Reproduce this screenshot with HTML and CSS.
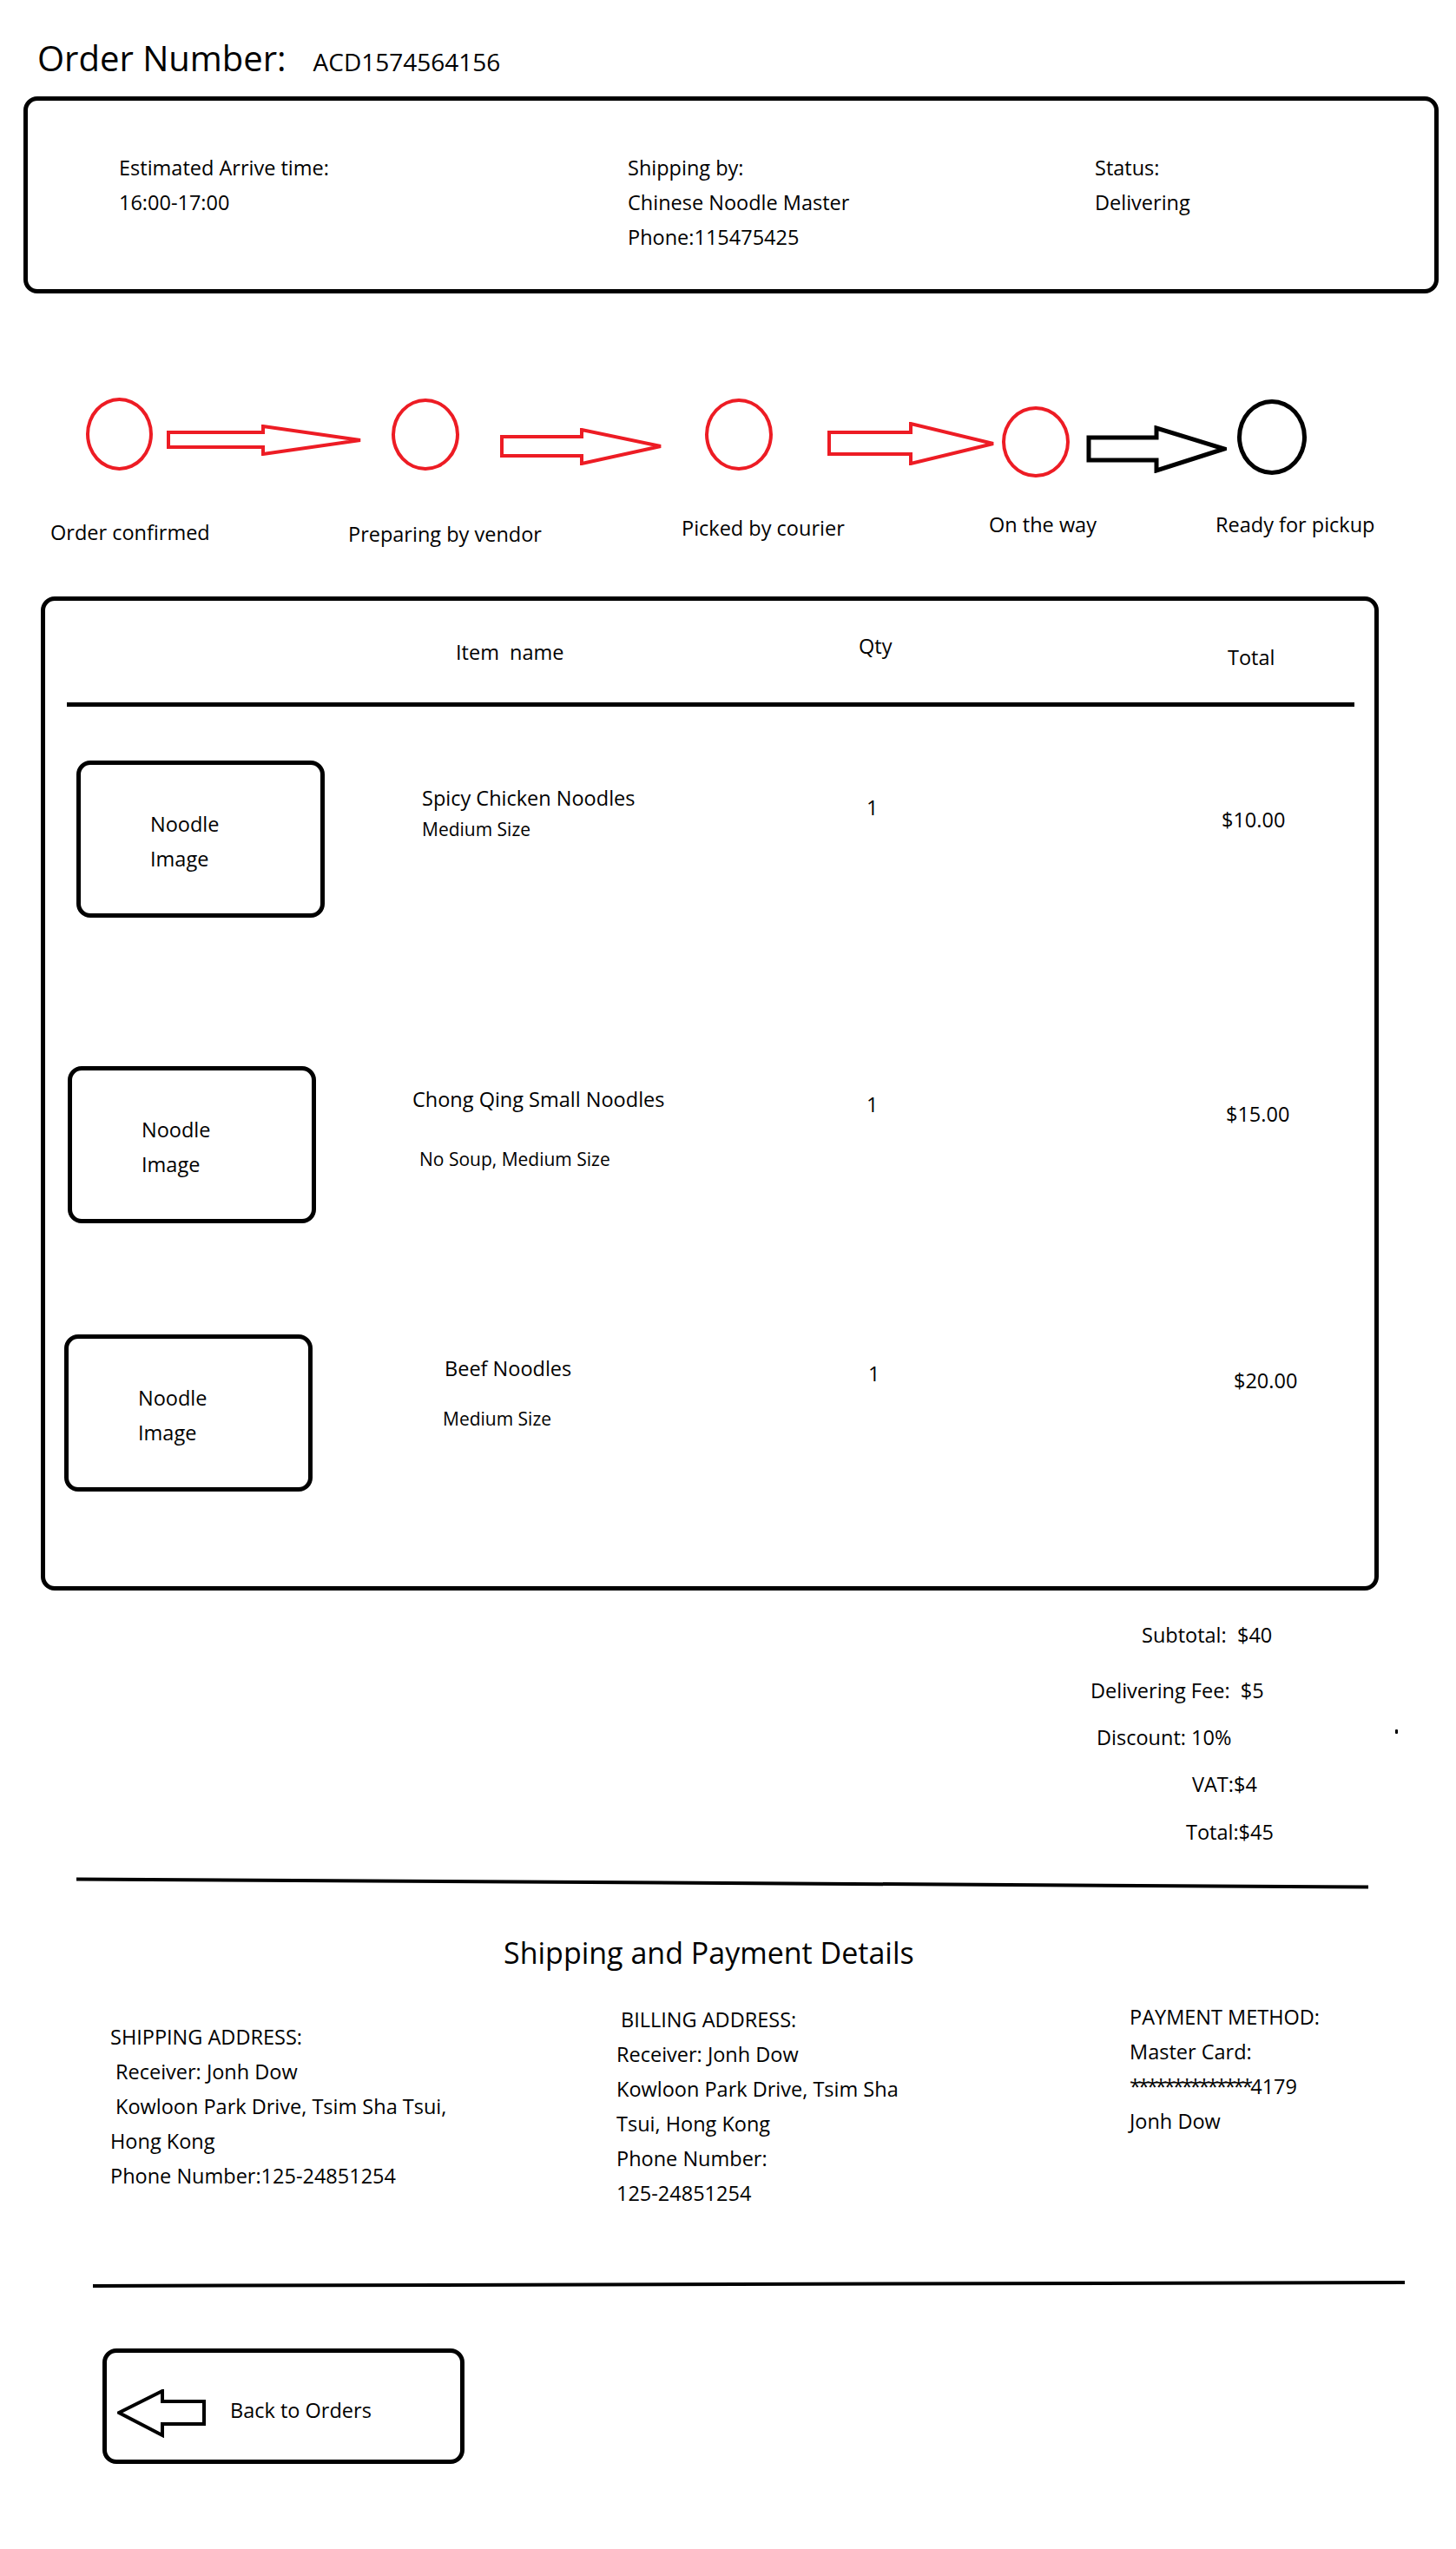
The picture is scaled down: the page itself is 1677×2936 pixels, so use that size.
FILE: index.html
```html
<!DOCTYPE html>
<html lang="en">
<head>
    <meta charset="UTF-8">
    <meta name="viewport" content="width=device-width, initial-scale=1.0">
    <title>Order Details</title>
    <link rel="stylesheet" href="styles.css">
</head>
<body>
    <div class="order-header">
        <h1>Order Number:</h1>
        <span class="order-id">ACD1574564156</span>
    </div>

    <div class="info-box">
        <div class="info-col">
            <div>Estimated Arrive time:</div>
            <div>16:00-17:00</div>
        </div>
        <div class="info-col">
            <div>Shipping by:</div>
            <div>Chinese Noodle Master</div>
            <div>Phone:115475425</div>
        </div>
        <div class="info-col">
            <div>Status:</div>
            <div>Delivering</div>
        </div>
    </div>

    <!-- progress: red = done, black = not yet -->
    <div class="steps">
        <div class="step-circle c1"></div>
        <svg class="arrow a1" width="226" height="36" viewBox="0 0 226 36">
            <polygon points="3,9 112,9 112,2 224,18 112,34 112,26 3,26" />
        </svg>
        <div class="step-circle c2"></div>
        <svg class="arrow a2" width="187" height="43" viewBox="0 0 187 43">
            <polygon points="2,10 94,10 94,2 185,21 94,41 94,32 2,32" />
        </svg>
        <div class="step-circle c3"></div>
        <svg class="arrow a3" width="195" height="50" viewBox="0 0 195 50">
            <polygon points="2,12 96,12 96,2 191,25 96,48 96,37 2,37" />
        </svg>
        <div class="step-circle c4"></div>
        <svg class="arrow a4 pending" width="162" height="55" viewBox="0 0 162 55">
            <polygon points="3,14 81,14 81,3 159,27 81,52 81,40 3,40" />
        </svg>
        <div class="step-circle c5 pending"></div>
    </div>
    <div class="step-labels">
        <div class="label-1">Order confirmed</div>
        <div class="label-2">Preparing by vendor</div>
        <div class="label-3">Picked by courier</div>
        <div class="label-4">On the way</div>
        <div class="label-5">Ready for pickup</div>
    </div>

    <div class="items-box">
        <div class="item-grid items-head">
            <span></span>
            <span class="head-name">Item  name</span>
            <span class="head-qty">Qty</span>
            <span class="head-total">Total</span>
        </div>
        <div class="head-rule"></div>

        <div class="item-grid item-row row-1">
            <div class="noodle-img"><div>Noodle</div><div>Image</div></div>
            <div>
                <div class="item-name">Spicy Chicken Noodles</div>
                <div class="item-desc">Medium Size</div>
            </div>
            <div class="item-qty">1</div>
            <div class="item-total">$10.00</div>
        </div>

        <div class="item-grid item-row row-2">
            <div class="noodle-img"><div>Noodle</div><div>Image</div></div>
            <div>
                <div class="item-name">Chong Qing Small Noodles</div>
                <div class="item-desc">No Soup, Medium Size</div>
            </div>
            <div class="item-qty">1</div>
            <div class="item-total">$15.00</div>
        </div>

        <div class="item-grid item-row row-3">
            <div class="noodle-img"><div>Noodle</div><div>Image</div></div>
            <div>
                <div class="item-name">Beef Noodles</div>
                <div class="item-desc">Medium Size</div>
            </div>
            <div class="item-qty">1</div>
            <div class="item-total">$20.00</div>
        </div>
    </div>

    <div class="summary">
        <div class="sum-line sum-subtotal">Subtotal:  $40</div>
        <div class="sum-line sum-fee">Delivering Fee:  $5</div>
        <div class="sum-line sum-discount">Discount: 10%<span class="stray-dot"></span></div>
        <div class="sum-line sum-vat">VAT:$4</div>
        <div class="sum-line sum-total">Total:$45</div>
    </div>
    <div class="rule rule-sum"></div>

    <h2 class="ship-title">Shipping and Payment Details</h2>
    <div class="ship-grid">
        <div class="ship-col col-shipping">
            <div>SHIPPING ADDRESS:</div>
            <div class="indent">Receiver: Jonh Dow</div>
            <div class="indent">Kowloon Park Drive, Tsim Sha Tsui,</div>
            <div>Hong Kong</div>
            <div>Phone Number:125-24851254</div>
        </div>
        <div class="ship-col col-billing">
            <div class="indent-sm">BILLING ADDRESS:</div>
            <div>Receiver: Jonh Dow</div>
            <div>Kowloon Park Drive, Tsim Sha</div>
            <div>Tsui, Hong Kong</div>
            <div>Phone Number:</div>
            <div>125-24851254</div>
        </div>
        <div class="ship-col col-payment">
            <div>PAYMENT METHOD:</div>
            <div>Master Card:</div>
            <div><span class="card-mask">**************</span>4179</div>
            <div>Jonh Dow</div>
        </div>
    </div>
    <div class="rule rule-bottom"></div>

    <a href="#" class="back-btn">
        <svg class="back-arrow" width="104" height="56" viewBox="0 0 104 56">
            <polygon points="2,27 52,2 52,14 100,14 100,40 52,40 52,53" />
        </svg>
        <span class="back-text">Back to Orders</span>
    </a>
</body>
</html>
```

FILE: styles.css
```css
body {
    margin: 0;
    font-family: "Open Sans", "Noto Sans", sans-serif;
    font-size: 23.5px;
    line-height: 40px;
    color: #000;
    background: #fff;
}

/* header */
.order-header {
    display: flex;
    align-items: baseline;
    height: 54px;
    line-height: 54px;
    padding: 40px 0 0 43px;
}
.order-header h1 {
    margin: 0;
    font-size: 40px;
    font-weight: 400;
}
.order-id {
    margin-left: 31px;
    font-size: 28px;
}

.info-box {
    box-sizing: border-box;
    display: grid;
    grid-template-columns: 586px 538px 1fr;
    width: 1630px;
    height: 227px;
    margin: 17px 0 0 27px;
    padding: 57px 0 0 105px;
    border: 5px solid #000;
    border-radius: 16px;
}

/* progress steps */
.steps {
    display: flex;
    align-items: flex-start;
    margin-top: 120px;
    padding-left: 99px;
}
.step-circle {
    flex-shrink: 0;
    box-sizing: border-box;
    width: 77px;
    height: 84px;
    border: 4px solid #ed1c24;
    border-radius: 50%;
}
.step-circle.pending {
    border: 5px solid #000;
}
.c2 { width: 78px; height: 83px; margin: 1px 0 0 34px; }
.c3 { width: 78px; height: 83px; margin: 1px 0 0 49px; }
.c4 { width: 78px; height: 82px; margin: 10px 0 0 6px; }
.c5 { width: 80px; height: 87px; margin: 2px 0 0 12px; }

.arrow {
    flex-shrink: 0;
}
.arrow polygon {
    fill: #fff;
    stroke: #ed1c24;
    stroke-width: 4;
}
.arrow.pending polygon {
    stroke: #000;
    stroke-width: 5;
}
.a1 { margin: 31px 0 0 15px; }
.a2 { margin: 35px 0 0 47px; }
.a3 { margin: 28px 0 0 63px; }
.a4 { margin: 32px 0 0 19px; }

.step-labels {
    display: grid;
    grid-template-columns: 343px 384px 354px 261px auto;
    align-items: start;
    margin-top: 34px;
    padding-left: 58px;
    white-space: nowrap;
}
.label-1 { margin-top: 9px; }
.label-2 { margin-top: 11px; }
.label-3 { margin-top: 4px; }

/* items table */
.items-box {
    box-sizing: border-box;
    width: 1541px;
    height: 1145px;
    margin: 52px 0 0 47px;
    border: 5px solid #000;
    border-radius: 16px;
}
.item-grid {
    display: grid;
    grid-template-columns: 401px 516px 409px auto;
    align-items: start;
    padding-left: 36px;
}
.items-head {
    padding-top: 32px;
}
.head-name {
    margin: 7px 0 0 36px;
    white-space: pre;
}
.head-qty {
    margin-left: -16px;
}
.head-total {
    margin-top: 13px;
}
.head-rule {
    width: 1483px;
    height: 5px;
    margin: 32px 0 0 25px;
    background: #000;
}

.noodle-img {
    box-sizing: border-box;
    width: 286px;
    height: 181px;
    padding: 48px 0 0 80px;
    border: 5px solid #000;
    border-radius: 16px;
}
.item-name {
    white-space: nowrap;
}
.item-desc {
    font-size: 21px;
    line-height: 30px;
    white-space: nowrap;
}

.row-1 { margin-top: 62px; }
.row-1 .item-name { margin: 23px 0 0 -3px; }
.row-1 .item-desc { margin: 1px 0 0 -3px; }
.row-1 .item-qty { margin: 34px 0 0 -7px; }
.row-1 .item-total { margin: 48px 0 0 -7px; }

.row-2 { margin-top: 171px; }
.row-2 .noodle-img { margin-left: -10px; }
.row-2 .item-name { margin: 18px 0 0 -14px; }
.row-2 .item-desc { margin: 34px 0 0 -6px; }
.row-2 .item-qty { margin: 24px 0 0 -7px; }
.row-2 .item-total { margin: 35px 0 0 -2px; }

.row-3 { margin-top: 128px; }
.row-3 .noodle-img { margin-left: -14px; }
.row-3 .item-name { margin: 19px 0 0 23px; }
.row-3 .item-desc { margin: 23px 0 0 21px; }
.row-3 .item-qty { margin: 25px 0 0 -5px; }
.row-3 .item-total { margin: 33px 0 0 7px; }

/* totals */
.summary {
    margin: 31px 0 0 1256px;
}
.sum-line {
    white-space: pre;
}
.sum-subtotal { margin-left: 59px; }
.sum-fee { margin-top: 24px; }
.sum-discount { margin: 14px 0 0 7px; }
.sum-vat { margin: 14px 0 0 117px; }
.sum-total { margin: 15px 0 0 110px; }
.stray-dot {
    display: inline-block;
    vertical-align: top;
    width: 3px;
    height: 5px;
    margin: 11px 0 0 189px;
    background: #000;
    border-radius: 1px;
}

.rule {
    height: 4px;
    background: #000;
}
.rule-sum {
    width: 1488px;
    margin: 37px 0 0 88px;
    transform: rotate(0.35deg);
}

/* shipping and payment */
.ship-title {
    margin: 55px 0 0 580px;
    font-size: 34px;
    font-weight: 400;
    line-height: 46px;
}
.ship-grid {
    display: grid;
    grid-template-columns: 583px 591px auto;
    align-items: start;
    margin-top: 31px;
    padding-left: 127px;
    white-space: nowrap;
}
.col-shipping { margin-top: 23px; }
.col-billing { margin-top: 3px; }
.indent { padding-left: 6px; }
.indent-sm { padding-left: 5px; }
.card-mask { letter-spacing: -3px; }

.rule-bottom {
    width: 1511px;
    margin: 83px 0 0 107px;
    transform: rotate(-0.15deg);
}

.back-btn {
    box-sizing: border-box;
    display: flex;
    align-items: flex-start;
    width: 417px;
    height: 133px;
    margin: 72px 0 0 118px;
    padding-left: 12px;
    border: 5px solid #000;
    border-radius: 16px;
    color: #000;
    text-decoration: none;
}
.back-arrow {
    flex-shrink: 0;
    margin-top: 42px;
}
.back-arrow polygon {
    fill: #fff;
    stroke: #000;
    stroke-width: 4;
}
.back-text {
    margin: 46px 0 0 26px;
}
```
